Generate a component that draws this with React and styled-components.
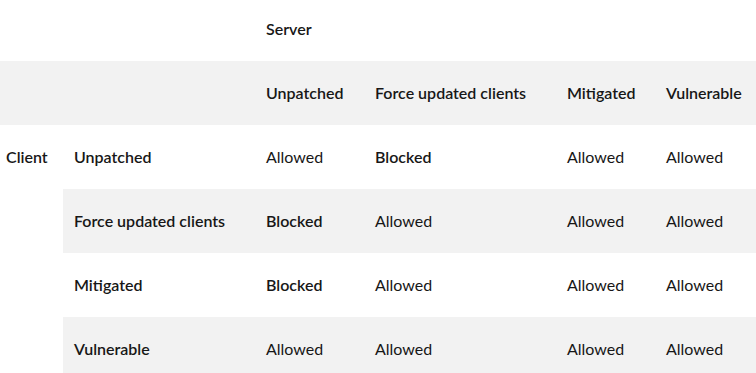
import React from "react";
import styled, { createGlobalStyle } from "styled-components";

const GlobalStyle = createGlobalStyle`
  body {
    margin: 0;
    background: #fff;
    font-family: Lato, "Noto Sans", sans-serif;
    color: #171717;
  }
`;

const Table = styled.table`
  width: 756px;
  border-collapse: collapse;
  table-layout: fixed;
  font-size: 16px;
  line-height: 20px;
`;

const TopRow = styled.tr`
  height: 61px;
`;

const Row = styled.tr`
  height: 64px;
`;

const Cell = styled.td`
  padding: 0 11px;
  vertical-align: middle;
  text-align: left;
  white-space: nowrap;
  font-weight: ${(p) => (p.$bold ? 600 : 400)};
  background: ${(p) => (p.$shade ? "#f2f2f2" : "transparent")};
`;

const HeadCell = styled(Cell).attrs({ as: "th" })`
  font-weight: 600;
`;

const TitleCell = styled(HeadCell)`
  padding-bottom: 3px;
`;

const SideCell = styled(HeadCell)`
  padding: 22px 0 0 6px;
  vertical-align: top;
  background: #fff;
`;

const cols = ["Unpatched", "Force updated clients", "Mitigated", "Vulnerable"];

const rows = [
  { name: "Unpatched", values: ["Allowed", "Blocked", "Allowed", "Allowed"] },
  { name: "Force updated clients", values: ["Blocked", "Allowed", "Allowed", "Allowed"] },
  { name: "Mitigated", values: ["Blocked", "Allowed", "Allowed", "Allowed"] },
  { name: "Vulnerable", values: ["Allowed", "Allowed", "Allowed", "Allowed"] },
];

const App = () => {
  return (
    <>
      <GlobalStyle />
      <Table>
        <colgroup>
          <col style={{ width: 63 }} />
          <col style={{ width: 192 }} />
          <col style={{ width: 109 }} />
          <col style={{ width: 192 }} />
          <col style={{ width: 99 }} />
          <col style={{ width: 101 }} />
        </colgroup>
        <thead>
          <TopRow>
            <TitleCell colSpan={2} />
            <TitleCell colSpan={4}>Server</TitleCell>
          </TopRow>
          <Row>
            <HeadCell $shade />
            <HeadCell $shade />
            {cols.map((c) => (
              <HeadCell $shade key={c}>
                {c}
              </HeadCell>
            ))}
          </Row>
        </thead>
        <tbody>
          {rows.map((r, i) => (
            <Row key={r.name}>
              {i === 0 && <SideCell rowSpan={4}>Client</SideCell>}
              <HeadCell $shade={i % 2 === 1}>{r.name}</HeadCell>
              {r.values.map((v, j) => (
                <Cell key={j} $shade={i % 2 === 1} $bold={v === "Blocked"}>
                  {v}
                </Cell>
              ))}
            </Row>
          ))}
        </tbody>
      </Table>
    </>
  );
};

export default App;
